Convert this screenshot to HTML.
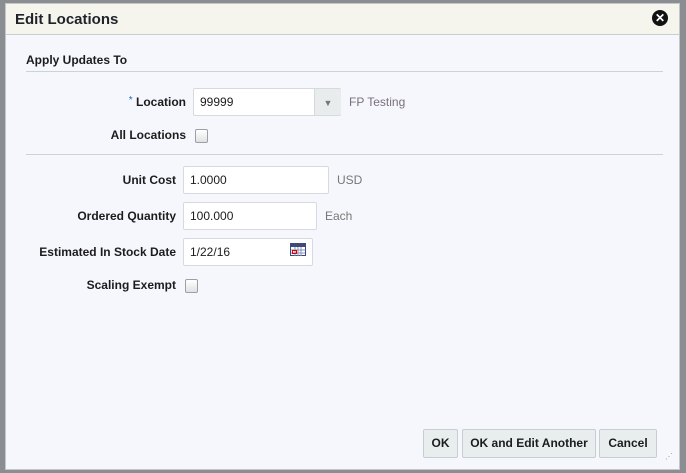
<!DOCTYPE html>
<html><head><style>
body{margin:0;width:686px;height:473px;background:#8a8d92;position:relative;overflow:hidden;font-family:"Liberation Sans",Arial,sans-serif;font-size:12px;color:#1c1c1c}
.dlg{position:absolute;left:5px;top:3px;width:675px;height:467px;background:#f6f7fd;border:1px solid #c4c6c8;box-sizing:border-box}
.hd{height:30px;background:#f5f5ee;border-bottom:1px solid #c9ccd0;position:relative}
.hd .t{position:absolute;left:9px;top:7px;font-size:15px;font-weight:bold;color:#1f2228}
.x{position:absolute;right:11px;top:6px;width:16px;height:16px;border-radius:50%;background:#111;color:#fff;font-size:12px;font-weight:bold;line-height:16px;text-align:center}
.a{position:absolute}
.lbl{font-weight:bold;text-align:right;font-size:12px}
.in{position:absolute;background:#fff;border:1px solid #d6d9de;border-radius:2px;box-sizing:border-box;padding-left:6px;font-size:12px;line-height:26px}
.cb{position:absolute;width:11px;height:12px;border:1px solid #9aa0a6;border-radius:2px;background:linear-gradient(#fff,#dfe1e4)}
.hr{position:absolute;left:21px;width:637px;height:1px;background:#c9d3dd}
.btn{position:absolute;top:429px;height:29px;border:1px solid #c8cdd0;border-radius:2px;background:#e8eeee;font-weight:bold;font-size:12px;line-height:27px;text-align:center;box-sizing:border-box}
.g{color:#777;font-size:12px}
</style></head><body>
<div class="dlg">
<div class="hd"><div class="t">Edit Locations</div><div class="x">✕</div></div>
</div>
<div class="a" style="left:26px;top:53px;font-weight:bold;font-size:12px">Apply Updates To</div>
<div class="hr" style="top:71px;left:26px;width:637px"></div>
<div class="a lbl" style="right:500px;top:95px"><span style="color:#2b6cb0;font-weight:normal;vertical-align:top;font-size:10px">*</span> Location</div>
<div class="in" style="left:193px;top:88px;width:148px;height:28px">99999</div>
<div class="a" style="left:314px;top:89px;width:26px;height:26px;background:#e8ecec;border-left:1px solid #d6d9de;border-radius:0 2px 2px 0;color:#777;text-align:center;line-height:28px;font-size:9px">▼</div>
<div class="a g" style="left:349px;top:95px;color:#7a6f7e">FP Testing</div>
<div class="a lbl" style="right:500px;top:128px">All Locations</div>
<div class="cb" style="left:195px;top:129px"></div>
<div class="hr" style="top:154px;left:26px"></div>
<div class="a lbl" style="right:510px;top:173px">Unit Cost</div>
<div class="in" style="left:183px;top:166px;width:146px;height:28px">1.0000</div>
<div class="a g" style="left:337px;top:173px">USD</div>
<div class="a lbl" style="right:510px;top:209px">Ordered Quantity</div>
<div class="in" style="left:183px;top:202px;width:134px;height:28px">100.000</div>
<div class="a g" style="left:325px;top:209px">Each</div>
<div class="a lbl" style="right:510px;top:245px">Estimated In Stock Date</div>
<div class="in" style="left:183px;top:238px;width:130px;height:28px">1/22/16</div>
<svg class="a" style="left:290px;top:243px" width="16" height="13"><rect x="0.5" y="0.5" width="15" height="12" fill="#fff" stroke="#3d4a7a"/><rect x="1" y="1" width="14" height="3" fill="#3d4a7a"/><path d="M1 7h14M1 10h14M5 4v9M8 4v9M11 4v9" stroke="#8a93b5" stroke-width="1"/><rect x="2.5" y="7.5" width="4" height="3" fill="none" stroke="#d00"/></svg>
<div class="a lbl" style="right:510px;top:278px">Scaling Exempt</div>
<div class="cb" style="left:185px;top:279px"></div>
<div class="btn" style="left:423px;width:35px">OK</div>
<div class="btn" style="left:462px;width:134px">OK and Edit Another</div>
<div class="btn" style="left:599px;width:58px">Cancel</div>
<div class="a" style="left:665px;top:452px;color:#999;font-size:8px;letter-spacing:-1px">⋰</div>
</body></html>
